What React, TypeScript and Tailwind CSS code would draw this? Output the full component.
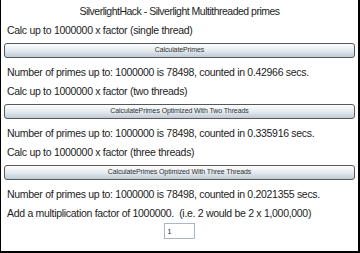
import React from 'react';

const font = { fontFamily: '"Liberation Sans", Arial, sans-serif' };

function PrimeButton({ label }: { label: string }) {
  return (
    <button
      className="mx-[3px] mt-[2px] flex h-[15px] items-center justify-center rounded-[3px] border border-[#55595d] bg-gradient-to-b from-[#fdfdfe] via-[#e6ebef] to-[#bfcbd5] text-[7px] tracking-[-0.1px] text-[#333]"
    >
      {label}
    </button>
  );
}

function Block({ calc, label, result }: { calc: string; label: string; result: string }) {
  return (
    <div className="flex flex-col">
      <div className="flex h-[20px] items-center px-[6px]">{calc}</div>
      <PrimeButton label={label} />
      <div className="mt-[6px] flex h-[18px] items-center px-[6px]">{result}</div>
    </div>
  );
}

export default function App() {
  return (
    <div
      style={font}
      className="flex h-[253px] w-[360px] flex-col border-b-2 border-l border-r-2 border-black bg-white pt-[3px] text-[10.5px] tracking-[-0.3px] text-[#1c1c1c]"
    >
      <div className="flex h-[18px] items-center justify-center tracking-[-0.5px]">
        SilverlightHack - Silverlight Multithreaded primes
      </div>

      <Block
        calc="Calc up to 1000000 x factor (single thread)"
        label="CalculatePrimes"
        result="Number of primes up to: 1000000 is 78498, counted in 0.42966 secs."
      />
      <Block
        calc="Calc up to 1000000 x factor (two threads)"
        label="CalculatePrimes Optimized With Two Threads"
        result="Number of primes up to: 1000000 is 78498, counted in 0.335916 secs."
      />
      <Block
        calc="Calc up to 1000000 x factor (three threads)"
        label="CalculatePrimes Optimized With Three Threads"
        result="Number of primes up to: 1000000 is 78498, counted in 0.2021355 secs."
      />

      <div className="flex h-[19px] items-center px-[6px]">
        Add a multiplication factor of 1000000.&nbsp; (i.e. 2 would be 2 x 1,000,000)
      </div>
      <div className="flex justify-center">
        <input
          defaultValue="1"
          className="ml-[-1px] h-[16px] w-[31px] border border-[#a8b8c6] px-[3px] text-[7px] text-[#222] outline-none"
        />
      </div>
    </div>
  );
}
